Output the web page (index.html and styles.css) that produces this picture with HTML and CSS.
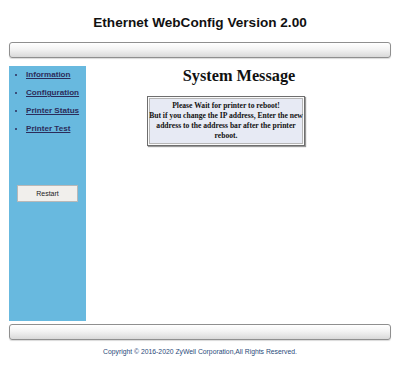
FILE: index.html
```html
<!DOCTYPE html>
<html>
<head>
<meta charset="utf-8">
<title>Ethernet WebConfig</title>
<link rel="stylesheet" href="styles.css">
</head>
<body>
<div class="page">
  <h1 class="title">Ethernet WebConfig Version 2.00</h1>
  <div class="bar"></div>
  <div class="main">
    <div class="sidebar">
      <ul class="menu">
        <li><a href="#">Information</a></li>
        <li><a href="#">Configuration</a></li>
        <li><a href="#">Printer Status</a></li>
        <li><a href="#">Printer Test</a></li>
      </ul>
      <button class="restart" type="button">Restart</button>
    </div>
    <div class="content">
      <h2 class="heading">System Message</h2>
      <div class="msg">Please Wait for printer to reboot!<br>But if you change the IP address, Enter the new address to the address bar after the printer reboot.</div>
    </div>
  </div>
  <div class="bar bar-bottom"></div>
  <div class="copyright">Copyright © 2016-2020 ZyWell Corporation,All Rights Reserved.</div>
</div>
</body>
</html>
```

FILE: styles.css
```css
html, body {
  margin: 0;
  padding: 0;
  background: #fff;
}
.page {
  width: 384px;
  margin: 0 8px;
  font-family: "Liberation Sans", Arial, sans-serif;
}
.title {
  margin: 0;
  height: 42px;
  box-sizing: border-box;
  padding-top: 14px;
  font-size: 13.6px;
  line-height: 17px;
  font-weight: bold;
  text-align: center;
  color: #111;
}
.bar {
  height: 16px;
  box-sizing: border-box;
  margin-left: 1px;
  width: 382px;
  border: 1px solid #8f8f8f;
  border-radius: 3px;
  background: linear-gradient(#ffffff, #f3f3f3 45%, #d9d9d9);
  box-shadow: 0 1px 1px rgba(0,0,0,0.15);
}
.main {
  display: flex;
  margin-top: 8px;
  height: 255px;
}
.sidebar {
  width: 77px;
  margin-left: 1px;
  background: #68b9df;
  display: flex;
  flex-direction: column;
}
.menu {
  margin: 0;
  padding: 0 0 0 17px;
  list-style: disc;
  font-size: 8.1px;
  line-height: 18px;
  font-weight: bold;
}
.menu li {
  color: #2c2c5a;
}
.menu a {
  color: #2c2c5a;
  text-decoration: underline;
}
.restart {
  margin: 47px 0 0 8px;
  width: 61px;
  height: 17px;
  padding: 0;
  border: 1px solid #b8b8b8;
  background: #f1efec;
  font-family: "Liberation Sans", Arial, sans-serif;
  font-size: 7px;
  color: #222;
}
.content {
  flex: 1;
}
.heading {
  margin: 0;
  font-family: "Liberation Serif", "Times New Roman", serif;
  font-size: 16.3px;
  line-height: 20px;
  font-weight: bold;
  text-align: center;
  color: #111;
}
.msg {
  margin: 10px 0 0 61px;
  width: 158px;
  height: 50px;
  box-sizing: border-box;
  padding: 4px 1px;
  border: 1px solid #6e6e6e;
  box-shadow: inset 0 0 0 1px #fbfbfb, inset 0 0 0 2px #b6b6b6, 1px 1px 1px #999;
  background: #e7eaf4;
  font-family: "Liberation Serif", "Times New Roman", serif;
  font-size: 7.6px;
  line-height: 10px;
  font-weight: bold;
  text-align: center;
  color: #111;
}
.bar-bottom {
  margin-top: 3px;
}
.copyright {
  margin-top: 7px;
  font-size: 6.8px;
  line-height: 10px;
  text-align: center;
  color: #2a4a7a;
}
```
